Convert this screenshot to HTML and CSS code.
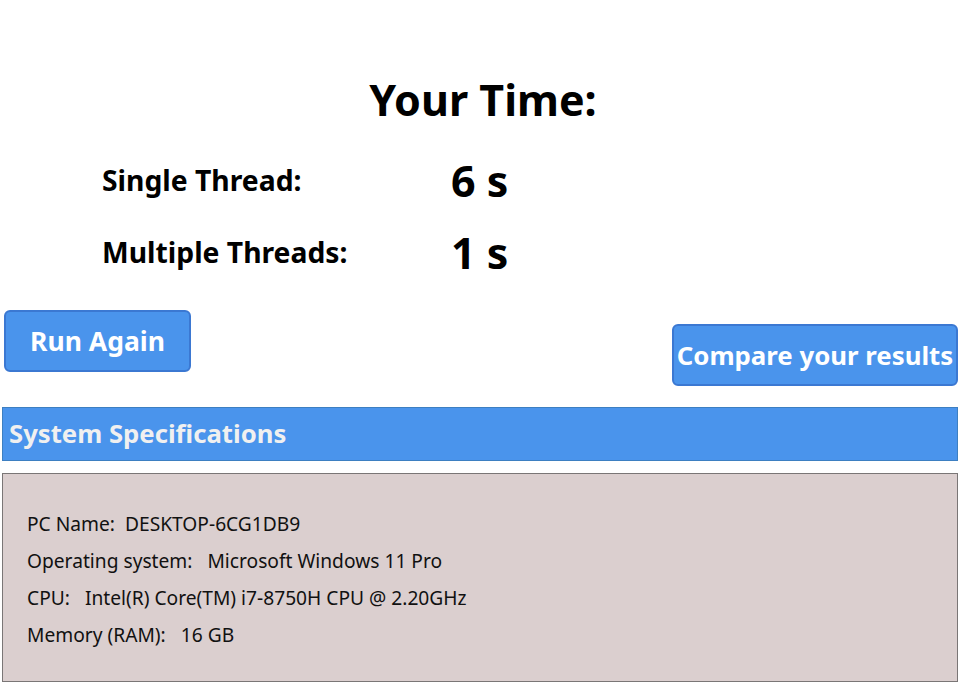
FILE: index.html
```html
<!DOCTYPE html>
<html>
<head>
<meta charset="utf-8">
<link rel="stylesheet" href="styles.css">
</head>
<body>
<main class="page">
  <h1 class="title">Your Time:</h1>
  <section class="results">
    <div class="row row-single">
      <span class="label">Single Thread:</span>
      <span class="value value-single">6 s</span>
    </div>
    <div class="row row-multi">
      <span class="label">Multiple Threads:</span>
      <span class="value value-multi">1 s</span>
    </div>
  </section>
  <div class="actions">
    <button class="btn btn-run">Run Again</button>
    <button class="btn btn-compare">Compare your results</button>
  </div>
  <div class="spec-header">System Specifications</div>
  <div class="spec-box">
    <div class="spec-line"><span class="k">PC Name:</span><span class="v v-pc">DESKTOP-6CG1DB9</span></div>
    <div class="spec-line"><span class="k">Operating system:</span><span class="v">Microsoft Windows 11 Pro</span></div>
    <div class="spec-line"><span class="k">CPU:</span><span class="v">Intel(R) Core(TM) i7-8750H CPU @ 2.20GHz</span></div>
    <div class="spec-line"><span class="k">Memory (RAM):</span><span class="v">16 GB</span></div>
  </div>
</main>
</body>
</html>
```

FILE: styles.css
```css
html, body {
  margin: 0;
  padding: 0;
  background: #ffffff;
}
body {
  font-family: "Noto Sans", "Open Sans", sans-serif;
  color: #000;
}
.page {
  width: 966px;
  height: 687px;
  overflow: hidden;
}
.title {
  margin: 0;
  padding-top: 74px;
  font-size: 43px;
  line-height: 52px;
  font-weight: 700;
  text-align: center;
}
.results {
  margin-top: 29px;
  padding-left: 102px;
  display: flex;
  flex-direction: column;
  gap: 22px;
}
.row {
  display: flex;
  align-items: center;
  height: 50px;
}
.label {
  width: 349px;
  font-size: 28.3px;
  font-weight: 700;
}
.value {
  font-weight: 700;
  font-size: 43px;
}
.actions {
  margin-top: 33px;
  display: flex;
  justify-content: space-between;
  align-items: flex-start;
  padding: 0 8px 0 4px;
}
.btn {
  font-family: "Noto Sans", "Open Sans", sans-serif;
  font-weight: 700;
  font-size: 26.5px;
  color: #ffffff;
  background: #4a94ec;
  border: 2px solid #3b78d2;
  border-radius: 6px;
  height: 62px;
  padding: 0;
  white-space: nowrap;
}
.btn-run { width: 187px; }
.btn-compare { width: 286px; margin-top: 14px; font-size: 25.8px; }
.spec-header {
  margin: 21px 8px 0 2px;
  height: 54px;
  box-sizing: border-box;
  background: #4a94ec;
  border: 1px solid #3d7fc1;
  color: #f0f0f0;
  font-weight: 700;
  font-size: 25.7px;
  line-height: 52px;
  padding-left: 6px;
}
.spec-box {
  margin: 12px 8px 0 2px;
  height: 209px;
  box-sizing: border-box;
  background: #dbcfcf;
  border: 1px solid #7a7676;
  padding: 31px 0 0 24px;
  font-size: 19.2px;
  color: #111;
}
.spec-line {
  line-height: 37px;
  height: 37px;
}
.v { margin-left: 15px; }
.v-pc { margin-left: 10px; }
```
